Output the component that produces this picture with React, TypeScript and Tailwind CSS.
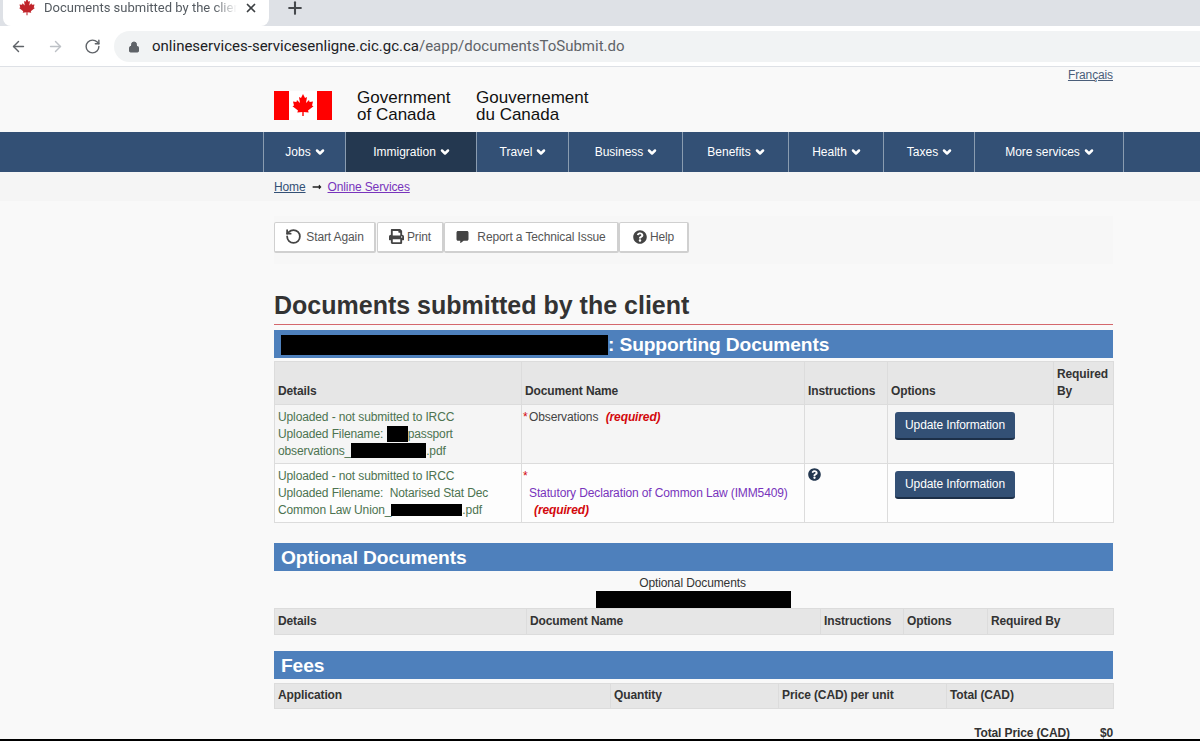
import { ArrowLeft, ArrowRight, RotateCw, RotateCcw, Lock, Plus, X, ChevronDown } from "lucide-react";
import { FaQuestionCircle, FaPrint, FaCommentAlt, FaLongArrowAltRight } from "react-icons/fa";

const Leaf = ({ className }: { className: string }) => (
  <svg viewBox="0 0 24 24" className={className} fill="currentColor">
    <path d="M12 1l-2 4-2-1 1 6-3-3-.6 2L2 8.500l1 4-1.500.8L7 17.500l-.7 2 5-.6V23h1.400v-4.100l5 .6-.7-2 5.500-4.200-1.500-.8 1-4-3.400.5L18 7l-3 3 1-6-2 1z" />
  </svg>
);

const Chev = () => <ChevronDown className="-mr-[2px] ml-[3px] h-[12px] w-[12px]" strokeWidth={5} />;

const nav: [string, string, boolean?][] = [
  ["Jobs", "w-[82px]"],
  ["Immigration", "w-[131px]", true],
  ["Travel", "w-[92px]"],
  ["Business", "w-[114px]"],
  ["Benefits", "w-[106px]"],
  ["Health", "w-[95px]"],
  ["Taxes", "w-[91px]"],
  ["More services", "w-[149px]"],
];

const th = "border border-[#dcdcdc] px-[3px] pt-[3px] pb-[4px] text-left align-bottom font-bold text-[#333333] leading-[17px]";
const td = "border border-[#dcdcdc] px-[3px] pt-[4px] pb-[3px] align-top leading-[17px]";

const UpdateBtn = () => (
  <button className="mt-[3px] ml-[4px] block h-[28px] w-[120px] rounded-[3px] border-b-2 border-[#1c2f48] bg-[#335075] text-[12px] text-white">
    Update Information
  </button>
);

const Bar = ({ children }: { children: React.ReactNode }) => (
  <div className="h-[28px] bg-[#4e80bc] pl-[7px] pt-[1px] text-[19.200px] font-bold leading-[27px] text-white">{children}</div>
);

const Tool = ({ w, children }: { w: string; children: React.ReactNode }) => (
  <div className={`flex h-[31px] items-center justify-center rounded-[2px] border border-r-2 border-b-2 border-[#d0d0d0] bg-white pb-[1px] text-[12px] text-[#555555] ${w}`}>
    {children}
  </div>
);

export default function App() {
  return (
    <div className="relative h-[741px] w-[1200px] overflow-hidden bg-[#f9f9f9] font-['Liberation_Sans',sans-serif] text-[12px] tracking-[-0.12px] text-[#333333]">
      {/* browser chrome */}
      <div className="flex h-[26px] items-start bg-[#dee1e6] font-['Roboto',sans-serif] tracking-normal">
        <div className="ml-[3px] flex h-[26px] w-[266px] items-start rounded-b-[8px] bg-white pl-[15px]">
          <Leaf className="-mt-[2px] h-[18px] w-[18px] text-[#c0242a]" />
          <span className="ml-[8px] w-[193px] overflow-hidden whitespace-nowrap text-[13px] leading-[15px] text-[#555b61] [mask-image:linear-gradient(to_right,black_88%,transparent)]">
            Documents submitted by the client
          </span>
          <X className="ml-[7px] mt-[1px] h-[14px] w-[14px] text-[#3c4043]" strokeWidth={3} />
        </div>
        <Plus className="ml-[16px] -mt-[2px] h-[20px] w-[20px] text-[#45484c]" strokeWidth={2.5} />
      </div>
      <div className="flex h-[41px] items-center border-b border-[#dee1e6] bg-white font-['Roboto',sans-serif] tracking-normal">
        <ArrowLeft className="ml-[10px] h-[17px] w-[17px] text-[#5f6368]" strokeWidth={2} />
        <ArrowRight className="ml-[20px] h-[17px] w-[17px] text-[#bdc1c6]" strokeWidth={2} />
        <RotateCw className="ml-[20px] h-[17px] w-[17px] text-[#5f6368]" strokeWidth={2} />
        <div className="ml-[13px] mt-[1px] flex h-[31px] w-[1086px] items-center rounded-l-full bg-[#f1f3f4] pl-[14px]">
          <Lock className="h-[12px] w-[12px] text-[#5f6368]" fill="#5f6368" />
          <span className="ml-[12px] whitespace-nowrap text-[15px] text-[#202124]">
            onlineservices-servicesenligne.cic.gc.ca<span className="text-[#5f6368]">/eapp/documentsToSubmit.do</span>
          </span>
        </div>
      </div>

      {/* gov header */}
      <div className="h-[65px] pl-[274px] pr-[87px] pt-[1px]">
        <div className="text-right text-[12px] leading-[14px] text-[#4b5e7a] underline">Français</div>
        <div className="mt-[7px] flex items-center">
          <div className="-mt-[2px] flex h-[29px] w-[58px] items-center bg-[#ff0000]">
            <div className="ml-[15px] flex h-[29px] w-[28px] items-center justify-center bg-white">
              <Leaf className="h-[24px] w-[24px] text-[#ff0000]" />
            </div>
          </div>
          <div className="ml-[25px] w-[119px] text-[17px] leading-[17px] tracking-normal text-[#111111]">Government<br />of Canada</div>
          <div className="text-[17px] leading-[17px] tracking-normal text-[#111111]">Gouvernement<br />du Canada</div>
        </div>
      </div>

      {/* nav */}
      <div className="flex h-[40px] bg-[#335075] pl-[263px] text-[12px] tracking-normal text-white">
        <div className="flex border-l border-[#8a9cb0]">
          {nav.map(([label, w, active]) => (
            <div key={label} className={`flex items-center justify-center border-r border-[#8a9cb0] ${w} ${active ? "bg-[#243850]" : ""}`}>
              {label}
              <Chev />
            </div>
          ))}
        </div>
      </div>

      {/* breadcrumb */}
      <div className="flex h-[29px] items-center bg-[#f5f5f5] pl-[274px] text-[12px]">
        <span className="text-[#335075] underline">Home</span>
        <FaLongArrowAltRight className="mx-[6px] h-[10px] w-[10px] text-[#222222]" />
        <span className="text-[#7834bc] underline">Online Services</span>
      </div>

      <div className="ml-[274px] w-[839px]">
        {/* toolbar */}
        <div className="mt-[15px] flex h-[48px] bg-[#f7f7f7] pt-[6px]">
          <Tool w="w-[102px]">
            <RotateCcw className="mr-[4px] h-[17px] w-[17px] text-[#444444]" strokeWidth={2.5} />Start Again
          </Tool>
          <Tool w="w-[67px] ml-[1px]">
            <FaPrint className="mr-[3px] h-[15px] w-[15px] text-[#444444]" />Print
          </Tool>
          <Tool w="w-[175px]">
            <FaCommentAlt className="mr-[8px] h-[12px] w-[13px] text-[#444444]" />Report a Technical Issue
          </Tool>
          <Tool w="w-[70px]">
            <FaQuestionCircle className="mr-[3px] h-[14px] w-[14px] text-[#444444]" />Help
          </Tool>
        </div>

        <h1 className="mt-[26px] h-[35px] border-b border-[#d4676c] text-[25px] font-bold leading-[30px] tracking-normal text-[#333333]">
          Documents submitted by the client
        </h1>

        <div className="mt-[5px]">
          <Bar>
            <span className="inline-block h-[20px] w-[327px] bg-black align-[-4px]" />
            <span>: Supporting Documents</span>
          </Bar>
        </div>

        <table className="mt-[3px] w-[839px] table-fixed border-collapse text-[12px]">
          <colgroup>
            <col className="w-[247px]" /><col className="w-[283px]" /><col className="w-[83px]" /><col className="w-[166px]" /><col className="w-[60px]" />
          </colgroup>
          <thead>
            <tr className="h-[43px] bg-[#e6e6e6]">
              <th className={th}>Details</th>
              <th className={th}>Document Name</th>
              <th className={th}>Instructions</th>
              <th className={th}>Options</th>
              <th className={th}>Required By</th>
            </tr>
          </thead>
          <tbody>
            <tr className="h-[59px] bg-[#f5f5f5]">
              <td className={`${td} text-[#4c7350]`}>
                Uploaded - not submitted to IRCC<br />
                Uploaded Filename:&nbsp; <span className="-ml-[3px] inline-block h-[16px] w-[21px] bg-black align-[-4px]" />passport<br />
                observations_<span className="inline-block h-[15px] w-[75px] bg-black align-[-3px]" />.pdf
              </td>
              <td className={`${td} pl-[1px] text-[#444444]`}>
                <span className="inline-block w-[6px] text-[#d3080c]">*</span>Observations&nbsp; <b className="ml-[1px] italic text-[#d3080c]">(required)</b>
              </td>
              <td className={td} />
              <td className={td}><UpdateBtn /></td>
              <td className={td} />
            </tr>
            <tr className="h-[59px] bg-[#fdfdfd]">
              <td className={`${td} text-[#4c7350]`}>
                Uploaded - not submitted to IRCC<br />
                Uploaded Filename:&nbsp; Notarised Stat Dec<br />
                Common Law Union_<span className="inline-block h-[12px] w-[71px] bg-black align-[-2px]" />.pdf
              </td>
              <td className={`${td} pl-[1px]`}>
                <span className="text-[#d3080c]">*</span><br />
                <span className="ml-[6px] text-[#7834bc]">Statutory Declaration of Common Law (IMM5409)</span><br />
                <b className="ml-[11px] italic text-[#d3080c]">(required)</b>
              </td>
              <td className={td}>
                <FaQuestionCircle className="h-[13px] w-[13px] text-[#243850]" />
              </td>
              <td className={td}><UpdateBtn /></td>
              <td className={td} />
            </tr>
          </tbody>
        </table>

        <div className="mt-[20px]"><Bar>Optional Documents</Bar></div>
        <div className="mt-[5px] text-center text-[12px] leading-[14px]">
          <div className="pr-[2px]">Optional Documents</div>
          <div className="mt-[1px] h-[17px]"><span className="mx-auto block h-[17px] w-[195px] bg-black" /></div>
        </div>
        <table className="w-[839px] table-fixed border-collapse text-[12px]">
          <colgroup>
            <col className="w-[252px]" /><col className="w-[294px]" /><col className="w-[83px]" /><col className="w-[84px]" /><col className="w-[126px]" />
          </colgroup>
          <thead>
            <tr className="h-[26px] bg-[#e6e6e6]">
              <th className={th}>Details</th>
              <th className={th}>Document Name</th>
              <th className={th}>Instructions</th>
              <th className={th}>Options</th>
              <th className={th}>Required By</th>
            </tr>
          </thead>
        </table>

        <div className="mt-[16px]"><Bar>Fees</Bar></div>
        <table className="mt-[4px] w-[839px] table-fixed border-collapse text-[12px]">
          <colgroup>
            <col className="w-[336px]" /><col className="w-[168px]" /><col className="w-[168px]" /><col className="w-[167px]" />
          </colgroup>
          <thead>
            <tr className="h-[25px] bg-[#e6e6e6]">
              <th className={th}>Application</th>
              <th className={th}>Quantity</th>
              <th className={th}>Price (CAD) per unit</th>
              <th className={th}>Total (CAD)</th>
            </tr>
          </thead>
        </table>
        <div className="mt-[17px] flex justify-end text-[12px] font-bold leading-[15px]">
          <span>Total Price (CAD)</span>
          <span className="ml-[30px]">$0</span>
        </div>
      </div>
      <div className="absolute inset-x-0 bottom-0 h-[2px] bg-black" />
    </div>
  );
}
